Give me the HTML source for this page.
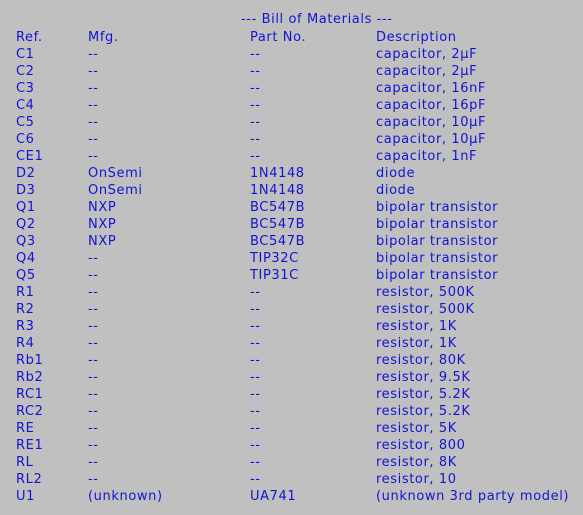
<!DOCTYPE html>
<html><head><style>
body{margin:0;width:583px;height:515px;background:#c0c0c0;overflow:hidden;font-family:"DejaVu Sans",sans-serif;font-size:13px;letter-spacing:0.6px;color:#1414d0}
.r{position:absolute;left:0;height:17px;line-height:17px;white-space:nowrap}
.r span{position:absolute;top:0}
.a{left:16px}.b{left:88px}.c{left:250px}.d{left:376px}
</style></head><body>
<div class="r" style="top:11px"><span style="left:241px">--- Bill of Materials ---</span></div>
<div id="t"></div>
<script>
var rows=[["Ref.","Mfg.","Part No.","Description"],
["C1","--","--","capacitor, 2µF"],["C2","--","--","capacitor, 2µF"],["C3","--","--","capacitor, 16nF"],["C4","--","--","capacitor, 16pF"],["C5","--","--","capacitor, 10µF"],["C6","--","--","capacitor, 10µF"],["CE1","--","--","capacitor, 1nF"],
["D2","OnSemi","1N4148","diode"],["D3","OnSemi","1N4148","diode"],
["Q1","NXP","BC547B","bipolar transistor"],["Q2","NXP","BC547B","bipolar transistor"],["Q3","NXP","BC547B","bipolar transistor"],["Q4","--","TIP32C","bipolar transistor"],["Q5","--","TIP31C","bipolar transistor"],
["R1","--","--","resistor, 500K"],["R2","--","--","resistor, 500K"],["R3","--","--","resistor, 1K"],["R4","--","--","resistor, 1K"],["Rb1","--","--","resistor, 80K"],["Rb2","--","--","resistor, 9.5K"],["RC1","--","--","resistor, 5.2K"],["RC2","--","--","resistor, 5.2K"],["RE","--","--","resistor, 5K"],["RE1","--","--","resistor, 800"],["RL","--","--","resistor, 8K"],["RL2","--","--","resistor, 10"],
["U1","(unknown)","UA741","(unknown 3rd party model)"]];
var h="";rows.forEach(function(r,i){h+='<div class="r" style="top:'+(29+17*i)+'px"><span class="a">'+r[0]+'</span><span class="b">'+r[1]+'</span><span class="c">'+r[2]+'</span><span class="d">'+r[3]+'</span></div>';});
document.getElementById("t").innerHTML=h;
</script>
</body></html>
